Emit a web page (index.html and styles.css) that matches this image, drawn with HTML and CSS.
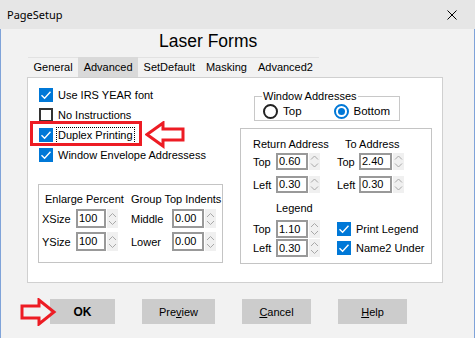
FILE: index.html
```html
<!DOCTYPE html>
<html lang="en">
<head>
  <meta charset="UTF-8">
  <meta name="viewport" content="width=device-width, initial-scale=1.0">
  <title>PageSetup</title>
  <link rel="stylesheet" href="styles.css">
</head>
<body>

  <div class="dialog">
    <div class="titlebar">
      <span class="title">PageSetup</span>
      <svg class="close" width="10" height="10" viewBox="0 0 10 10">
        <path d="M0.5 0.5 L9.5 9.5 M9.5 0.5 L0.5 9.5" stroke="#000" stroke-width="1" fill="none"/>
      </svg>
    </div>

    <div class="content">
      <h1>Laser Forms</h1>

      <!-- tab strip -->
      <div class="tabs">
        <span class="tab">General</span>
        <span class="tab active">Advanced</span>
        <span class="tab">SetDefault</span>
        <span class="tab">Masking</span>
        <span class="tab">Advanced2</span>
      </div>

      <div class="panel">
        <div class="col-left">
          <div class="checks">
            <div class="check">
              <svg class="cb" width="14" height="14" viewBox="0 0 14 14"><rect width="14" height="14" fill="#0078d7"/><path d="M2.5 7.2 L5.6 10.2 L11.5 3.8" stroke="#fff" stroke-width="1.4" fill="none"/></svg>
              <span>Use IRS YEAR font</span>
            </div>
            <div class="check">
              <svg class="cb" width="14" height="14" viewBox="0 0 14 14"><rect x="1" y="1" width="12" height="12" fill="#fff" stroke="#333" stroke-width="2"/></svg>
              <span>No Instructions</span>
            </div>
            <div class="check">
              <svg class="cb" width="14" height="14" viewBox="0 0 14 14"><rect width="14" height="14" fill="#0078d7"/><path d="M2.5 7.2 L5.6 10.2 L11.5 3.8" stroke="#fff" stroke-width="1.4" fill="none"/></svg>
              <span class="focus">Duplex Printing</span>
            </div>
            <div class="check">
              <svg class="cb" width="14" height="14" viewBox="0 0 14 14"><rect width="14" height="14" fill="#0078d7"/><path d="M2.5 7.2 L5.6 10.2 L11.5 3.8" stroke="#fff" stroke-width="1.4" fill="none"/></svg>
              <span>Window Envelope Addressess</span>
            </div>
          </div>

          <div class="group enlarge">
            <div class="head">
              <span class="head-a">Enlarge Percent</span>
              <span>Group Top Indents</span>
            </div>
            <div class="erow">
              <span class="lbl w34">XSize</span>
              <span class="num w30">100</span>
              <span class="spin"></span>
              <span class="lbl w41 ml13">Middle</span>
              <span class="num w32">0.00</span>
              <span class="spin"></span>
            </div>
            <div class="erow">
              <span class="lbl w34">YSize</span>
              <span class="num w30">100</span>
              <span class="spin"></span>
              <span class="lbl w41 ml13">Lower</span>
              <span class="num w32">0.00</span>
              <span class="spin"></span>
            </div>
          </div>
        </div>

        <div class="col-right">
          <fieldset class="winaddr">
            <legend>Window Addresses</legend>
            <div class="radios">
              <span class="radio"></span><span>Top</span>
              <span class="radio on ml27"></span><span>Bottom</span>
            </div>
          </fieldset>

          <div class="group addr">
            <div class="head">
              <span class="head-b">Return Address</span>
              <span>To Address</span>
            </div>
            <div class="arow">
              <span class="lbl w23">Top</span>
              <span class="num w32">0.60</span>
              <span class="spin"></span>
              <span class="lbl w22 ml17">Top</span>
              <span class="num w33">2.40</span>
              <span class="spin"></span>
            </div>
            <div class="arow second">
              <span class="lbl w23">Left</span>
              <span class="num w32">0.30</span>
              <span class="spin"></span>
              <span class="lbl w22 ml17">Left</span>
              <span class="num w33">0.30</span>
              <span class="spin"></span>
            </div>

            <div class="legend-head">Legend</div>
            <div class="lrow">
              <span class="lbl w23">Top</span>
              <span class="num w32">1.10</span>
              <span class="spin"></span>
              <div class="check ml17">
                <svg class="cb" width="14" height="14" viewBox="0 0 14 14"><rect width="14" height="14" fill="#0078d7"/><path d="M2.5 7.2 L5.6 10.2 L11.5 3.8" stroke="#fff" stroke-width="1.4" fill="none"/></svg>
                <span>Print Legend</span>
              </div>
            </div>
            <div class="lrow second">
              <span class="lbl w23">Left</span>
              <span class="num w32">0.30</span>
              <span class="spin"></span>
              <div class="check ml17">
                <svg class="cb" width="14" height="14" viewBox="0 0 14 14"><rect width="14" height="14" fill="#0078d7"/><path d="M2.5 7.2 L5.6 10.2 L11.5 3.8" stroke="#fff" stroke-width="1.4" fill="none"/></svg>
                <span>Name2 Under</span>
              </div>
            </div>
          </div>
        </div>
      </div>

      <div class="buttons">
        <button class="btn ok">OK</button>
        <button class="btn preview">Pre<u>v</u>iew</button>
        <button class="btn cancel"><u>C</u>ancel</button>
        <button class="btn help"><u>H</u>elp</button>
      </div>
    </div>

    <!-- annotations drawn over the dialog -->
    <div class="redbox"></div>
    <svg class="arrow arrow-dup" width="40" height="28" viewBox="0 0 40 28">
      <polygon points="2,13.5 18,2 18,8 38,8 38,19 18,19 18,25" fill="none" stroke="#ed1c24" stroke-width="3" stroke-linejoin="miter"/>
    </svg>
    <svg class="arrow arrow-ok" width="37" height="28" viewBox="0 0 37 28">
      <polygon points="2,8 19,8 19,2 34,14 19,26 19,20 2,20" fill="none" stroke="#ed1c24" stroke-width="3" stroke-linejoin="miter"/>
    </svg>
  </div>

</body>
</html>
```

FILE: styles.css
```css
* {
  box-sizing: border-box;
}
body {
  margin: 0;
  background-color: #fff;
  font-family: "Liberation Sans", Arial, sans-serif;
  font-size: 11px;
  color: #000;
}
.dialog {
  position: relative;
  width: 475px;
  height: 338px;
  background-color: #f2f2f2;
}
.titlebar {
  height: 29px;
  background-color: #e6e6e6;
  display: flex;
  align-items: center;
  justify-content: space-between;
  padding: 0 18px 0 7px;
}
.title {
  font-family: "Noto Sans", sans-serif;
  font-size: 11px;
}
.content {
  height: 309px;
  border-left: 1px solid #7fa3d9;
  border-right: 1px solid #7fa3d9;
  overflow: hidden;
}
h1 {
  margin: 1px 0 5px 158px;
  font-size: 17.5px;
  font-weight: normal;
  line-height: 22px;
}
.tabs {
  display: flex;
  margin-left: 27px;
  width: 291px;
  height: 20px;
  border-top: 1px solid #e2e2e2;
  line-height: 19px;
}
.tab {
  padding: 0 5.5px;
}
.tab.active {
  background-color: #d9d9d9;
  margin-top: -1px;
  line-height: 20px;
}
.panel {
  display: flex;
  gap: 17px;
  margin-left: 26px;
  width: 416px;
  height: 206px;
  padding: 7px 10px 0 10px;
  background-color: #fff;
  border: 1px solid #d0d0d0;
}
.col-left {
  width: 185px;
}
.col-right {
  width: 192px;
}
.check {
  display: flex;
  align-items: center;
  gap: 5px;
}
.checks .check {
  height: 20px;
  padding-left: 1px;
}
.cb {
  flex: none;
}
.focus {
  margin-left: -1px;
  padding: 0 1px;
  line-height: 15px;
  outline: 1px dotted #000;
}
.group {
  border: 1px solid #c4c4c4;
}
.head {
  display: flex;
  line-height: 14px;
}
.lbl {
  display: inline-block;
}
.num {
  display: inline-block;
  border: 2px solid #999;
  background-color: #fff;
  padding-left: 1px;
  line-height: 13px;
}
.spin {
  display: inline-block;
  width: 11px;
  margin-left: 1px;
  align-self: stretch;
  background-color: #f0f0f0;
  background-image: url("data:image/svg+xml,%3Csvg xmlns='http://www.w3.org/2000/svg' width='11' height='18' viewBox='0 0 11 18'%3E%3Cpath d='M2 7 L5.5 3.5 L9 7 M2 11 L5.5 14.5 L9 11' stroke='%23a8a8a8' stroke-width='1' fill='none'/%3E%3C/svg%3E");
  background-repeat: no-repeat;
  background-position: center;
}
.w22 { width: 22px; }
.w23 { width: 23px; }
.w30 { width: 30px; }
.w32 { width: 32px; }
.w33 { width: 33px; }
.w34 { width: 34px; }
.w41 { width: 41px; }
.ml13 { margin-left: 13px; }
.ml17 { margin-left: 17px; }
.ml27 { margin-left: 27px; }

/* enlarge / indents box */
.enlarge {
  margin-top: 19px;
  height: 79px;
  padding: 7px 0 0 3px;
}
.enlarge .head {
  padding-left: 3px;
}
.head-a {
  width: 86px;
}
.erow {
  display: flex;
  align-items: center;
  height: 19px;
  margin-top: 3px;
}
.erow + .erow {
  margin-top: 4px;
}
.erow .num {
  height: 19px;
  line-height: 15px;
}

/* window addresses */
.winaddr {
  margin: 5px 0 0 14px;
  width: 146px;
  padding: 1px 0 2px 8px;
  border: 1px solid #c8c8c8;
  min-inline-size: 0;
}
.winaddr legend {
  padding: 0 1px;
  margin-left: -1px;
  line-height: 13px;
}
.radios {
  display: flex;
  align-items: center;
  gap: 5px;
  height: 14px;
  font-size: 11.5px;
}
.radio {
  width: 15px;
  height: 15px;
  border: 2px solid #222;
  border-radius: 50%;
  background-color: #fff;
  position: relative;
}
.radio.on {
  border-color: #0078d7;
}
.radio.on::after {
  content: "";
  position: absolute;
  left: 2px;
  top: 2px;
  width: 7px;
  height: 7px;
  border-radius: 50%;
  background-color: #0078d7;
}

/* address box */
.addr {
  margin-top: 7px;
  height: 136px;
  padding: 8px 0 0 12px;
}
.head-b {
  width: 92px;
}
.arow, .lrow {
  display: flex;
  align-items: center;
}
.arow {
  margin-top: 2px;
  height: 17px;
}
.arow.second {
  margin-top: 6px;
}
.arow .num {
  height: 17px;
}
.legend-head {
  margin-top: 8px;
  padding-left: 23px;
  line-height: 14px;
}
.lrow {
  margin-top: 5px;
  height: 18px;
}
.lrow.second {
  margin-top: 1px;
}
.lrow .num {
  height: 18px;
  line-height: 14px;
}

/* bottom buttons */
.buttons {
  display: flex;
  gap: 27px;
  margin: 16px 0 0 49px;
}
.btn {
  height: 25px;
  padding: 0;
  border: none;
  background-color: #ccc;
  font-family: "Liberation Sans", Arial, sans-serif;
  font-size: 11px;
  color: #000;
}
.ok {
  width: 65px;
  font-weight: bold;
  font-size: 12px;
}
.preview {
  width: 73px;
}
.cancel, .help {
  width: 69px;
}

/* red annotations */
.redbox {
  position: absolute;
  left: 30px;
  top: 121px;
  width: 112px;
  height: 25px;
  border: 3px solid #ed1c24;
}
.arrow {
  position: absolute;
}
.arrow-dup {
  left: 145px;
  top: 121px;
}
.arrow-ok {
  left: 20px;
  top: 298px;
}
```
